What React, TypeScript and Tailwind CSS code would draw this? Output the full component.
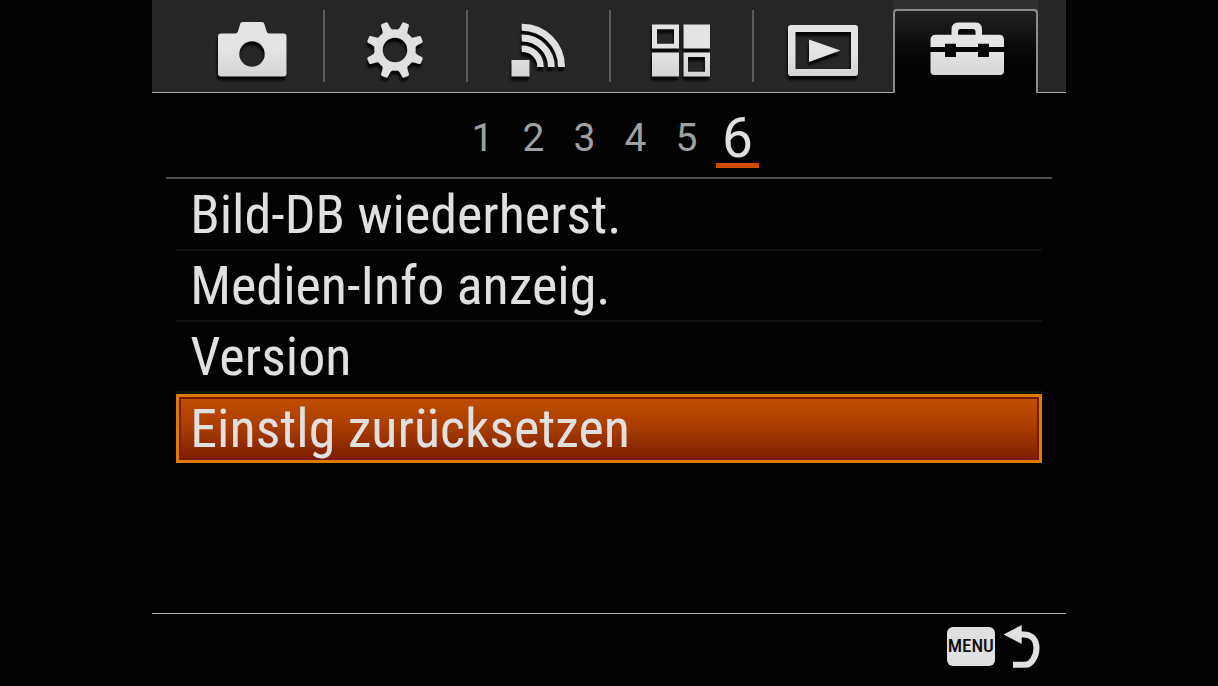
import { useState } from "react";
import type { ReactNode } from "react";

function Icon({ id, children }: { id: string; children: ReactNode }) {
  return (
    <svg
      viewBox="0 0 80 60"
      aria-hidden="true"
      className="h-[60px] w-20 shrink-0 overflow-visible drop-shadow-[-1px_4px_1px_#060606]"
    >
      <defs>
        <linearGradient id={id} gradientUnits="userSpaceOnUse" x1="0" y1="0" x2="0" y2="60">
          <stop offset="0.5" stopColor="#e4e4e4" />
          <stop offset="1" stopColor="#d2d2d2" />
        </linearGradient>
      </defs>
      <g fill={`url(#${id})`}>{children}</g>
    </svg>
  );
}

const TEETH = [22.5, 67.5, 112.5, 157.5, 202.5, 247.5, 292.5, 337.5];

const TABS = [
  {
    label: "Kamera",
    icon: (
      <Icon id="g-camera">
        <path
          fillRule="evenodd"
          d="M9 13.500H23C25 13.500 25.600 12.500 26 11L28 4.500C28.500 2.700 29.300 2 31 2H49.500C51.200 2 52 2.700 52.500 4.500L54.500 11C55 12.500 55.600 13.500 57.500 13.500H71.500Q74.500 13.500 74.500 16.500V53.500Q74.500 56.500 71.500 56.500H9Q6 56.500 6 53.500V16.500Q6 13.500 9 13.500ZM40 21.300A12.700 12.700 0 1 0 40 46.700A12.700 12.700 0 1 0 40 21.300Z"
        />
      </Icon>
    ),
  },
  {
    label: "Benutzereinstellungen",
    icon: (
      <Icon id="g-gear">
        <circle cx="39" cy="30" r="16.500" fill="none" stroke="#e0e0e0" strokeWidth="8.500" />
        <g fill="#e0e0e0">
          {TEETH.map((a) => (
            <path
              key={a}
              transform={`translate(-1 0) rotate(${a} 40 30)`}
              d="M33.500 11.500Q35.500 10 35.800 7L36.300 2.500Q36.500 1 38 1H42Q43.500 1 43.700 2.500L44.200 7Q44.500 10 46.500 11.500Z"
            />
          ))}
        </g>
      </Icon>
    ),
  },
  {
    label: "Drahtlos",
    icon: (
      <Icon id="g-wireless">
        <rect x="12.500" y="40" width="18" height="16.500" />
        <g fill="none" stroke="#e0e0e0">
          <path strokeWidth="7" d="M22.700 7.200C45 7 62.500 25 62.500 47" />
          <path strokeWidth="6.800" d="M22.700 18C39 17.800 52.300 31 52.300 47" />
          <path strokeWidth="6.500" d="M22.700 28.700C33 28.500 41.500 36 41.500 47" />
        </g>
      </Icon>
    ),
  },
  {
    label: "Applikation",
    icon: (
      <Icon id="g-apps">
        <path
          fillRule="evenodd"
          d="M11 4.500H38V28.500H11ZM16 9.300V23.700H33V9.300ZM42.500 4.500H69V28.500H42.500ZM11 32.500H38V56.500H11ZM42.500 32.500H69V56.500H42.500ZM47 37V51.700H64V37Z"
        />
      </Icon>
    ),
  },
  {
    label: "Wiedergabe",
    icon: (
      <Icon id="g-play">
        <path
          fillRule="evenodd"
          d="M8 5H71Q74 5 74 8V53Q74 56 71 56H7Q4 56 4 53V8Q4 5 7 5ZM11.500 12V49H67V12Z"
        />
        <path d="M25 19.500L56.500 30.500L25 42Z" />
      </Icon>
    ),
  },
  {
    label: "Einstellung",
    icon: (
      <Icon id="g-toolbox">
        <path
          fillRule="evenodd"
          d="M3.500 27V20Q3.500 14.700 9 14.700H24.500V10Q24.500 2.500 31 2.500H49Q55 2.500 55 10V14.700H72Q77 14.700 77 20V27H62V23.700H51V27H29V23.700H18V27ZM31 14.700H48.500V12Q48.500 9 46 9H33.500Q31 9 31 12Z"
        />
        <path d="M3.500 32H18V37H29V32H51V37H62V32H77V51Q77 55 73 55H7.500Q3.500 55 3.500 51Z" />
      </Icon>
    ),
  },
];

const PAGES = [1, 2, 3, 4, 5, 6];
const ITEMS = ["Bild-DB wiederherst.", "Medien-Info anzeig.", "Version", "Einstlg zurücksetzen"];

export default function App() {
  const [tab, setTab] = useState(5);
  const [page, setPage] = useState(6);
  const [item, setItem] = useState(3);

  return (
    <div className="flex min-h-screen justify-center bg-[#020202] font-[Roboto,sans-serif] text-[#e0e0e0]">
      <div className="flex w-3/4 flex-col">
        <nav
          aria-label="Menü"
          className="grid grid-cols-6 border-b border-[#a8a8a8] bg-[#262626] px-7"
        >
          {TABS.map((t, i) => (
            <div
              key={t.label}
              className={i === tab ? "-mb-px -ml-0.5 flex bg-[#303030] pt-[9px]" : "flex py-[10px]"}
            >
              <button
                type="button"
                aria-label={t.label}
                aria-current={i === tab ? "page" : undefined}
                onClick={() => setTab(i)}
                className={
                  i === tab
                    ? "flex h-[84px] w-full justify-center rounded-t-sm border-x-2 border-t-2 border-[#8c8c8c] bg-linear-to-b from-[#222222] to-[#020202] to-70% pt-[9px] pl-1"
                    : i === 0 || i === tab + 1
                      ? "flex h-[72px] w-full justify-center pt-[10px]"
                      : "flex h-[72px] w-full justify-center border-l-2 border-[#5c5c5c] pt-[10px]"
                }
              >
                {t.icon}
              </button>
            </div>
          ))}
        </nav>

        <main className="flex grow flex-col px-[14px]">
          <div className="flex h-[86px] items-start justify-center gap-2 border-b-2 border-[#505050] pt-5 pl-0.5">
            {PAGES.map((p) => (
              <button
                key={p}
                type="button"
                aria-current={p === page ? "page" : undefined}
                onClick={() => setPage(p)}
                className={
                  p === page
                    ? "h-[55px] w-[43px] border-b-[5px] border-[#d04c00] text-[55px] leading-[50px]"
                    : "h-[50px] w-[43px] text-[39px] leading-[50px] text-[#a0a0a0]"
                }
              >
                {p}
              </button>
            ))}
          </div>

          <ul className="flex flex-col px-[10px] pt-px font-['Roboto_Condensed',Roboto,sans-serif] text-[54px]">
            {ITEMS.map((label, i) => (
              <li key={label}>
                <button
                  type="button"
                  aria-current={i === item ? "true" : undefined}
                  onClick={() => setItem(i)}
                  className={
                    i === item
                      ? "mt-px flex h-[69px] w-full items-center border-[3px] border-[#dd7a00] bg-linear-to-b from-[#c05000] via-[#a83c00] to-[#7c1e00] pl-[11px] shadow-[inset_0_0_0_2px_#7a1a00]"
                      : "flex h-[71px] w-full items-center border-b-2 border-[#101010] pl-[14px]"
                  }
                >
                  {label}
                </button>
              </li>
            ))}
          </ul>
        </main>

        <footer className="flex h-[73px] items-start justify-end border-t border-[#a8a8a8] pt-[11px] pr-[26px]">
          <button type="button" aria-label="MENU zurück" className="flex items-start gap-2">
            <span className="mt-0.5 flex h-[39px] w-12 items-center justify-center rounded-md bg-[#e0e0e0] font-['Roboto_Condensed',Roboto,sans-serif] text-[19px] font-medium text-[#101010]">
              MENU
            </span>
            <svg viewBox="0 0 37 44" aria-hidden="true" className="h-11 w-[37px]">
              <path fill="#e0e0e0" d="M0.500 9.500L18.700 0V19Z" />
              <path
                fill="none"
                stroke="#e0e0e0"
                strokeWidth="6"
                d="M17 9.500H21C29 9.500 33.500 15 33.500 23C33.500 32 28 39.700 22.500 39.700H10"
              />
            </svg>
          </button>
        </footer>
      </div>
    </div>
  );
}
